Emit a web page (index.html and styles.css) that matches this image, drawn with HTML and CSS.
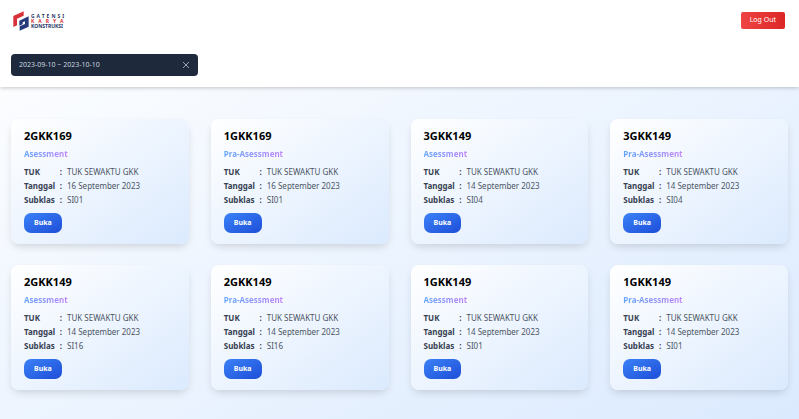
FILE: index.html
```html
<!DOCTYPE html>
<html lang="id">
<head>
<meta charset="utf-8">
<meta name="viewport" content="width=device-width, initial-scale=1">
<title>Gatensi Karya Konstruksi</title>
<link rel="stylesheet" href="styles.css">
</head>
<body>
<header class="header">
  <div class="topbar">
    <a class="brand" href="#">
      <svg class="brand-mark" viewBox="0 0 48 60" aria-hidden="true">
        <path d="M1 48V15L32 1v13L12 23v20z" fill="#d93039"/>
        <path d="M19 29l28-13v31L20 59V46l16-7V31l-7 3v6l-10 4z" fill="#263b7b"/>
      </svg>
      <span class="brand-name">
        <span class="brand-line brand-wide">GATENSI</span>
        <span class="brand-line brand-wider">KARYA</span>
        <span class="brand-line">KONSTRUKSI</span>
      </span>
    </a>
    <button class="logout" type="button">Log Out</button>
  </div>
  <div class="datepicker">
    <input class="date-input" type="text" aria-label="Rentang tanggal" value="2023-09-10 ~ 2023-10-10">
    <button class="clear" type="button" aria-label="Hapus">
      <svg viewBox="0 0 8 8" aria-hidden="true"><path d="M1 1l6 6M7 1L1 7"/></svg>
    </button>
  </div>
</header>
<main class="cards">
  <article class="card">
    <h2 class="title">2GKK169</h2>
    <p class="kind">Asessment</p>
    <dl class="details">
      <dt>TUK</dt><dd>TUK SEWAKTU GKK</dd>
      <dt>Tanggal</dt><dd>16 September 2023</dd>
      <dt>Subklas</dt><dd>SI01</dd>
    </dl>
    <button class="open" type="button">Buka</button>
  </article>
  <article class="card">
    <h2 class="title">1GKK169</h2>
    <p class="kind">Pra-Asessment</p>
    <dl class="details">
      <dt>TUK</dt><dd>TUK SEWAKTU GKK</dd>
      <dt>Tanggal</dt><dd>16 September 2023</dd>
      <dt>Subklas</dt><dd>SI01</dd>
    </dl>
    <button class="open" type="button">Buka</button>
  </article>
  <article class="card">
    <h2 class="title">3GKK149</h2>
    <p class="kind">Asessment</p>
    <dl class="details">
      <dt>TUK</dt><dd>TUK SEWAKTU GKK</dd>
      <dt>Tanggal</dt><dd>14 September 2023</dd>
      <dt>Subklas</dt><dd>SI04</dd>
    </dl>
    <button class="open" type="button">Buka</button>
  </article>
  <article class="card">
    <h2 class="title">3GKK149</h2>
    <p class="kind">Pra-Asessment</p>
    <dl class="details">
      <dt>TUK</dt><dd>TUK SEWAKTU GKK</dd>
      <dt>Tanggal</dt><dd>14 September 2023</dd>
      <dt>Subklas</dt><dd>SI04</dd>
    </dl>
    <button class="open" type="button">Buka</button>
  </article>
  <article class="card">
    <h2 class="title">2GKK149</h2>
    <p class="kind">Asessment</p>
    <dl class="details">
      <dt>TUK</dt><dd>TUK SEWAKTU GKK</dd>
      <dt>Tanggal</dt><dd>14 September 2023</dd>
      <dt>Subklas</dt><dd>SI16</dd>
    </dl>
    <button class="open" type="button">Buka</button>
  </article>
  <article class="card">
    <h2 class="title">2GKK149</h2>
    <p class="kind">Pra-Asessment</p>
    <dl class="details">
      <dt>TUK</dt><dd>TUK SEWAKTU GKK</dd>
      <dt>Tanggal</dt><dd>14 September 2023</dd>
      <dt>Subklas</dt><dd>SI16</dd>
    </dl>
    <button class="open" type="button">Buka</button>
  </article>
  <article class="card">
    <h2 class="title">1GKK149</h2>
    <p class="kind">Asessment</p>
    <dl class="details">
      <dt>TUK</dt><dd>TUK SEWAKTU GKK</dd>
      <dt>Tanggal</dt><dd>14 September 2023</dd>
      <dt>Subklas</dt><dd>SI01</dd>
    </dl>
    <button class="open" type="button">Buka</button>
  </article>
  <article class="card">
    <h2 class="title">1GKK149</h2>
    <p class="kind">Pra-Asessment</p>
    <dl class="details">
      <dt>TUK</dt><dd>TUK SEWAKTU GKK</dd>
      <dt>Tanggal</dt><dd>14 September 2023</dd>
      <dt>Subklas</dt><dd>SI01</dd>
    </dl>
    <button class="open" type="button">Buka</button>
  </article>
</main>
</body>
</html>
```
FILE: styles.css
```css
* {
  box-sizing: border-box;
}

body {
  margin: 0;
  min-height: 100vh;
  font: 8px/14px "Noto Sans", "Open Sans", sans-serif;
  color: #4b5563;
  background: linear-gradient(to bottom right, #ffffff, #dbeafe);
}

button,
input {
  font: inherit;
  border: 0;
}

button {
  cursor: pointer;
}

.header {
  padding: 11px;
  background: #ffffff;
  box-shadow: 0 1px 4px rgba(0, 0, 0, 0.22);
}

.topbar {
  display: flex;
  align-items: center;
  justify-content: space-between;
  padding: 0 3px 0 2px;
  margin-bottom: 23px;
}

.brand {
  display: flex;
  align-items: center;
  gap: 2px;
  text-decoration: none;
}

.brand-mark {
  width: 16px;
  height: 20px;
}

.brand-name {
  display: flex;
  flex-direction: column;
  font-size: 5px;
  line-height: 5px;
  font-weight: 700;
  color: #2b3768;
}

.brand-line {
  white-space: nowrap;
}

.brand-wide {
  letter-spacing: 2px;
}

.brand-wider {
  letter-spacing: 4px;
  color: #d93039;
}

.logout {
  height: 17px;
  margin-bottom: 2px;
  padding: 0 9px;
  border-radius: 2px;
  font-size: 7px;
  color: #ffffff;
  background: linear-gradient(to right, #ef4444, #dc2626);
}

.datepicker {
  display: flex;
  align-items: center;
  width: 187px;
  height: 22px;
  padding: 0 8px;
  border-radius: 4px;
  font-size: 7px;
  background: #1e293b;
}

.date-input {
  flex: 1;
  min-width: 0;
  padding: 0;
  color: #cbd5e1;
  background: transparent;
  outline: none;
}

.clear {
  display: flex;
  padding: 0;
  background: transparent;
}

.clear svg {
  width: 8px;
  height: 8px;
  fill: none;
  stroke: #94a3b8;
  stroke-width: 1;
}

.cards {
  display: grid;
  grid-template-columns: repeat(4, 1fr);
  gap: 21px 22px;
  padding: 32px 11px;
}

.card {
  padding: 9px 13px 11px;
  border-radius: 8px;
  background: linear-gradient(to bottom right, #ffffff, #dbeafe);
  box-shadow: 0 4px 8px -2px rgba(0, 0, 0, 0.16);
}

.title {
  margin: 0 0 4px;
  font-size: 11px;
  line-height: 16px;
  font-weight: 700;
  color: #000000;
}

.kind {
  width: fit-content;
  margin: 0 0 5px;
  line-height: 12px;
  font-weight: 700;
  color: transparent;
  background: linear-gradient(to right, #60a5fa, #c084fc);
  background-clip: text;
}

.details {
  display: grid;
  grid-template-columns: 38px 1fr;
  column-gap: 5px;
  margin: 0 0 6px;
}

.details dt {
  display: flex;
  justify-content: space-between;
  font-weight: 700;
  color: #374151;
}

.details dt::after {
  content: ":";
}

.details dd {
  margin: 0;
}

.open {
  display: block;
  height: 20px;
  padding: 0 10px;
  border-radius: 7px;
  font-size: 7px;
  font-weight: 700;
  color: #ffffff;
  background: linear-gradient(to bottom right, #3b82f6, #1d4ed8);
}
```
